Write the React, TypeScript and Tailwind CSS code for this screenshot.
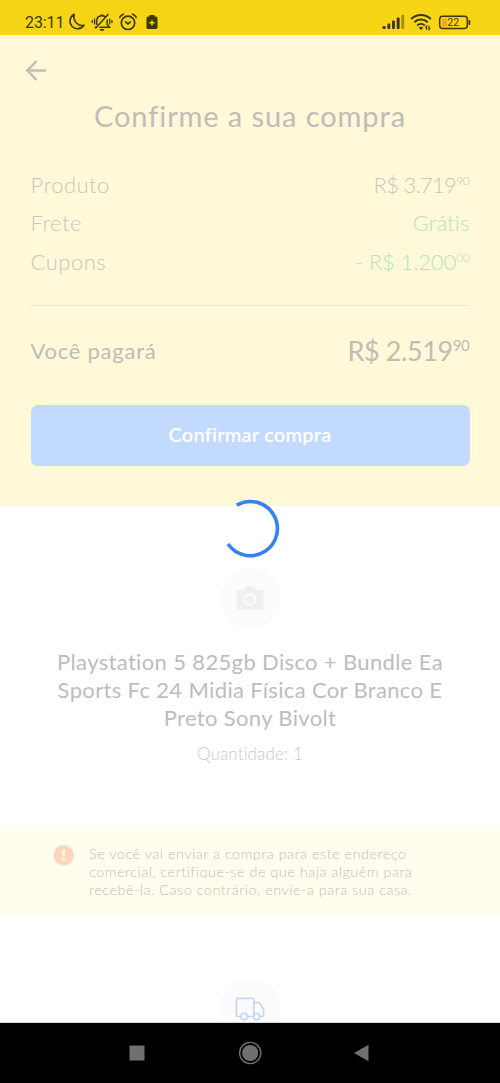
import type { ReactNode } from 'react'

interface PriceProps {
  value: string
  cents: string
  valueClass?: string
  centsClass: string
}

const Price = ({ value, cents, valueClass, centsClass }: PriceProps) => (
  <span className="flex items-start">
    <span className={valueClass}>{value}</span>
    <span className={centsClass}>{cents}</span>
  </span>
)

const Row = ({ label, children }: { label: string; children: ReactNode }) => (
  <div className="flex h-[38.3px] items-center justify-between whitespace-nowrap">
    <span className="tracking-[0.5px]">{label}</span>
    {children}
  </div>
)

const StatusBar = () => (
  <header className="flex h-[35px] items-center justify-between bg-[#f6d516] pt-[9px] pr-[29px] pl-[25px] text-[#3f3708]">
    <div className="flex items-center">
      <span className="w-[43px] pt-px font-[Roboto] text-[16px] leading-[20px] tracking-[-0.1px] whitespace-nowrap">23:11</span>
      {/* Moon */}
      <svg width="18" height="18" viewBox="0 0 18 18" fill="none" stroke="currentColor" strokeWidth="1.6" strokeLinejoin="round">
        <path d="M6.2 1.3A7.6 7.6 0 1 0 16 12.2C10.5 13.8 4.5 8.5 6.2 1.3Z" />
      </svg>
      {/* Muted bell */}
      <svg className="ml-[5px]" width="22" height="20" viewBox="0 0 22 20" fill="none" stroke="currentColor" strokeWidth="1.5">
        <path d="M5.7 13V9.2C5.700 5.800 7.800 3.700 11 3.700c1.300 0 2.300.3 3.200 1M16.200 7.500v5l2.300 2.800H8.500M3.700 15.300h1.500M17.400 2 4.400 16.500" />
        <path d="M9.500 2.400h3v1.400h-3ZM8.600 17h4.800a2.400 1.900 0 0 1-4.800 0Z" fill="currentColor" stroke="none" />
        <path d="M3.600 6.500v6M1.300 8v3M18.700 6.500v6M20.900 8v3" strokeWidth="1.3" />
      </svg>
      {/* Alarm */}
      <svg className="ml-[5px]" width="20" height="20" viewBox="0 0 20 20" fill="none" stroke="currentColor" strokeWidth="1.7" strokeLinecap="round">
        <circle cx="10" cy="10.8" r="6.7" />
        <path d="M1.800 5.300Q3 3 5.400 2.200M18.200 5.300Q17 3 14.600 2.200M7.700 10 10 11.800l2.300-1.800" />
      </svg>
      {/* Battery saver */}
      <svg className="ml-[8px]" width="12" height="16" viewBox="0 0 12 16">
        <rect x="3.5" y="1" width="5" height="2" fill="currentColor" />
        <rect x="0.5" y="2.5" width="11" height="12.5" rx="1.6" fill="currentColor" />
        <path d="M6 6.200v5.200M3.400 8.800h5.200" stroke="#f6d516" strokeWidth="1.4" />
      </svg>
    </div>
    <div className="flex items-center">
      {/* Signal */}
      <svg width="23" height="16" viewBox="0 0 23 16" fill="currentColor">
        <rect x="0.5" y="12" width="3.2" height="3" rx="1" />
        <rect x="5.4" y="9.5" width="2.8" height="5.5" rx="1" />
        <rect x="10" y="6.5" width="2.9" height="8.5" rx="1" />
        <rect x="14.7" y="3.5" width="2.9" height="11.5" rx="1" />
        <rect x="19.3" y="0.8" width="2.9" height="14.2" rx="1" opacity="0.45" />
      </svg>
      {/* Wifi */}
      <svg className="ml-[5px]" width="22" height="18" viewBox="0 0 22 18" fill="none" stroke="currentColor" strokeWidth="2">
        <path d="M1.200 6a14 14 0 0 1 19.600 0M4.300 9.300a9.500 9.500 0 0 1 13.400 0M7.200 12.400a5.600 5.600 0 0 1 7.600 0" />
        <path d="M8.600 14.600q2.400-1.900 4.800 0L11 17Z" fill="currentColor" stroke="none" />
        <path d="M16.600 17v-3.800l-1.200 1.500M19 12.800v3.800l1.200-1.500" strokeWidth="1.1" />
      </svg>
      {/* Battery */}
      <svg className="ml-[6px]" width="33" height="15" viewBox="0 0 33 15">
        <rect x="1.7" y="1.2" width="27.6" height="12.4" rx="3" fill="none" stroke="currentColor" strokeWidth="1.5" />
        <rect x="4" y="3.5" width="5" height="8" rx="1" fill="#f5a623" />
        <rect x="30.5" y="5" width="1.8" height="5" rx="0.8" fill="currentColor" />
        <text x="15.2" y="11.3" textAnchor="middle" fontFamily="Roboto" fontSize="10.5" fill="currentColor">22</text>
      </svg>
    </div>
  </header>
)

const Summary = () => (
  <section className="h-[471px] bg-[#fff8d9] px-[30.5px]">
    <svg className="-ml-[6px] pt-[24px]" width="24" height="47" viewBox="0 0 24 23" fill="none" stroke="#bebebf" strokeWidth="2.5">
      <path d="M21 11.500H2.500M11.600 2 2.300 11.500l9.300 9.500" />
    </svg>
    <h1 className="mt-[15px] text-center text-[29px] leading-[38px] tracking-[0.9px] whitespace-nowrap text-[#bebeb6]">
      Confirme a sua compra
    </h1>
    <div className="mt-[31px] text-[22px] leading-[28px] font-light text-[#c9c7ba]">
      <Row label="Produto">
        <Price value="R$ 3.719" cents="90" valueClass="tracking-[-0.7px]" centsClass="text-[12px] leading-[20px] tracking-[-0.3px]" />
      </Row>
      <Row label="Frete">
        <span className="tracking-[0.2px] text-[#b5e3c1]">Grátis</span>
      </Row>
      <Row label="Cupons">
        <span className="text-[#b5e3c1]">
          <Price value="- R$ 1.200" cents="00" valueClass="tracking-[-0.1px]" centsClass="text-[12px] leading-[20px] tracking-[-0.3px]" />
        </span>
      </Row>
    </div>
    <div className="mt-[24px] h-[1.5px] bg-[#ece7cf]" />
    <div className="mt-[26px] flex h-[38px] items-center justify-between whitespace-nowrap text-[#bebeb6]">
      <span className="pb-px text-[22px] tracking-[0.75px]">Você pagará</span>
      <span className="text-[27px] leading-[38px]">
        <Price value="R$ 2.519" cents="90" valueClass="tracking-[-0.4px]" centsClass="text-[15px] leading-[27px] tracking-[-0.3px]" />
      </span>
    </div>
    <button className="mt-[34.5px] flex h-[61px] w-full items-center justify-center rounded-[7px] bg-[#c2daff] pb-[3px] text-[20px] font-semibold tracking-[0.2px] whitespace-nowrap text-white">
      Confirmar compra
    </button>
  </section>
)

const Product = () => (
  <section className="flex h-[320px] flex-col items-center pt-[61.5px]">
    <div className="flex size-[61px] items-center justify-center rounded-full bg-[#fcfcfc]">
      <svg width="28" height="24" viewBox="0 0 28 24">
        <path d="M3 4h5l1.700-3q.6-1 1.700-1h5.400q1.100 0 1.700 1l1.700 3H25q2.500 0 2.500 2.500v14.500q0 2.500-2.500 2.500H3q-2.500 0-2.500-2.500V6.500Q.5 4 3 4Z" fill="#f0f0f0" />
        <circle cx="14" cy="13.5" r="5.3" fill="none" stroke="#fcfcfc" strokeWidth="2" />
      </svg>
    </div>
    <h2 className="mt-[19px] text-center text-[22px] leading-[28.3px] tracking-[0.35px] whitespace-nowrap text-[#bdbdbd]">
      Playstation 5 825gb Disco + Bundle Ea
      <br />
      Sports Fc 24 Midia Física Cor Branco E
      <br />
      Preto Sony Bivolt
    </h2>
    <p className="mt-[10px] text-[17px] leading-[24px] font-light tracking-[0.15px] whitespace-nowrap text-[#c9c9c9]">Quantidade: 1</p>
  </section>
)

const Notice = () => (
  <section className="flex h-[91px] bg-[#fffded] pt-[19px] pl-[53px]">
    <svg width="21" height="21" viewBox="0 0 21 21">
      <circle cx="10.7" cy="10.3" r="10.2" fill="#fdd6ba" />
      <path d="M9.400 5h2.800l-.5 6.800h-1.800Z" fill="#fffded" />
      <circle cx="10.8" cy="14.5" r="1.4" fill="#fffded" />
    </svg>
    <p className="ml-[15px] text-[14.5px] leading-[18px] font-light tracking-[0.48px] whitespace-nowrap text-[#bfbfb7]">
      Se você vai enviar a compra para este endereço
      <br />
      comercial, certifique-se de que haja alguém para
      <br />
      recebê-la. Caso contrário, envie-a para sua casa.
    </p>
  </section>
)

const Shipping = () => (
  <section className="flex h-[106px] justify-center overflow-hidden border-b border-[#d5d9d9] pt-[61px]">
    <div className="flex size-[61px] shrink-0 items-center justify-center rounded-full bg-[#fcfcfc]">
      <svg width="30" height="24" viewBox="0 0 30 24" fill="none" stroke="#c3d8f6" strokeWidth="1.7">
        <path d="M5.700 19.500H3q-1.600 0-1.600-1.600V3q0-1.600 1.600-1.600h14.300q1.600 0 1.600 1.600v16.500H12.300M18.900 5.600h4.300q1 0 1.600.9l3.300 5q.5.700.5 1.500v5q0 1.500-1.500 1.500h-1.900" />
        <circle cx="9.3" cy="19.6" r="3.2" />
        <circle cx="21.7" cy="19.6" r="3.2" />
      </svg>
    </div>
  </section>
)

const NavBar = () => (
  <nav className="flex h-[60px] items-center bg-black pl-[129px]">
    <svg width="16" height="16" viewBox="0 0 16 16">
      <rect x="0.5" y="0.5" width="15" height="15" fill="#707070" />
    </svg>
    <svg className="ml-[93px]" width="24" height="24" viewBox="0 0 24 24">
      <circle cx="12.2" cy="12" r="10.6" fill="none" stroke="#707070" strokeWidth="1.4" />
      <circle cx="12.2" cy="12" r="8.1" fill="#707070" />
    </svg>
    <svg className="ml-[91px]" width="17" height="18" viewBox="0 0 17 18">
      <path d="M1 9 15.500.7v16.600Z" fill="#707070" />
    </svg>
  </nav>
)

export default function App() {
  return (
    <div className="relative h-[1083px] w-[500px] overflow-hidden bg-white font-[Lato,sans-serif] [font-variant-ligatures:none]">
      <StatusBar />
      <Summary />
      <Product />
      <Notice />
      <Shipping />
      <NavBar />

      {/* Loading spinner */}
      <svg className="absolute top-[498px] left-[220px]" width="60" height="61" viewBox="0 0 60 61" fill="none">
        <path d="M16.800 7.100A27.100 27.100 0 1 1 8 46" stroke="#3483f0" strokeWidth="3.6" />
      </svg>
    </div>
  )
}
